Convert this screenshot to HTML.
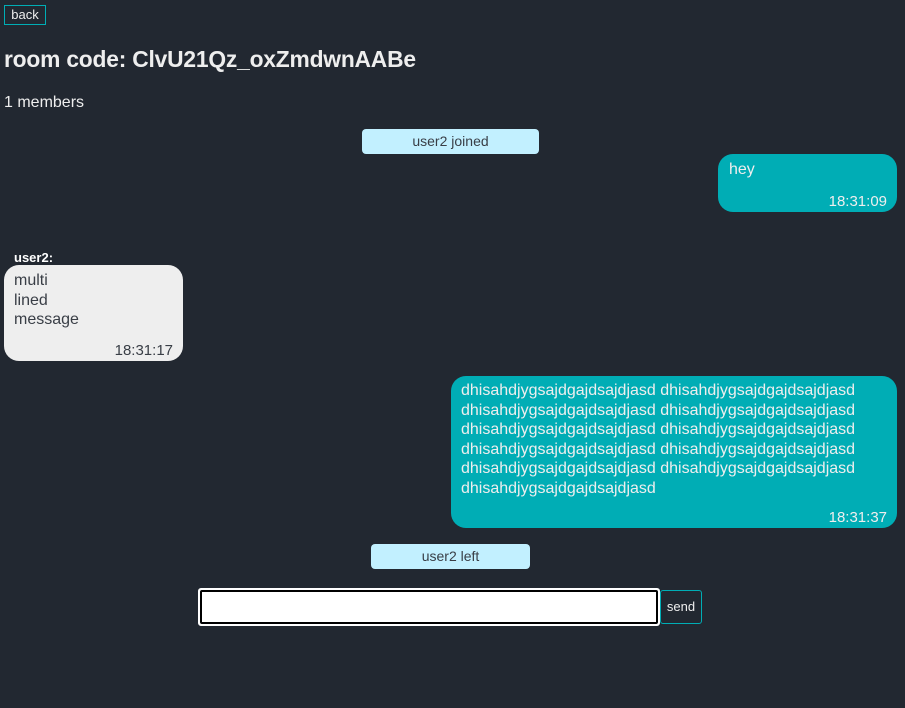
<!DOCTYPE html>
<html><head><meta charset="utf-8"><style>
*{margin:0;padding:0;box-sizing:border-box}
body{width:905px;height:708px;background:#222831;font-family:"Liberation Sans",sans-serif;color:#eeeeee;position:relative;overflow:hidden}
.a{position:absolute}
.back{left:4px;top:5px;width:42px;height:20px;border:1px solid #00adb5;font-size:13px;line-height:18px;text-align:center;color:#eee}
h1{position:absolute;left:4px;top:46px;font-size:22.8px;font-weight:bold;letter-spacing:-0.2px}
.mem{left:4px;top:94px;font-size:16px}
.sys{background:#c2f0ff;color:#393e46;border-radius:4px;font-size:14px;text-align:center;height:25px;line-height:25px}
.me{background:#00adb5;border-radius:15px;color:#eee;font-size:16px}
.ts{position:absolute;right:10px;bottom:2px;font-size:15px}
.other{background:#eeeeee;border-radius:15px;color:#393e46;font-size:16px}
.ln{position:absolute;left:10px;white-space:pre;font-size:16px;letter-spacing:0}
</style></head><body>
<div class="a back">back</div>
<h1>room code: ClvU21Qz_oxZmdwnAABe</h1>
<div class="a mem">1 members</div>
<div class="a sys" style="left:362px;top:129px;width:177px">user2 joined</div>
<div class="a me" style="left:718px;top:154px;width:179px;height:58px"><div class="a" style="left:11px;top:7px">hey</div><div class="ts">18:31:09</div></div>
<div class="a" style="left:14px;top:250px;font-size:13px;font-weight:bold;color:#fff">user2:</div>
<div class="a other" style="left:4px;top:265px;width:179px;height:96px"><div class="a" style="left:10px;top:6px;line-height:19.5px">multi<br>lined<br>message</div><div class="ts" style="right:10px">18:31:17</div></div>
<div class="a me" style="left:451px;top:376px;width:446px;height:152px">
<div class="ln" style="top:5px;line-height:19.5px">dhisahdjygsajdgajdsajdjasd dhisahdjygsajdgajdsajdjasd
dhisahdjygsajdgajdsajdjasd dhisahdjygsajdgajdsajdjasd
dhisahdjygsajdgajdsajdjasd dhisahdjygsajdgajdsajdjasd
dhisahdjygsajdgajdsajdjasd dhisahdjygsajdgajdsajdjasd
dhisahdjygsajdgajdsajdjasd dhisahdjygsajdgajdsajdjasd
dhisahdjygsajdgajdsajdjasd</div>
<div class="ts">18:31:37</div></div>
<div class="a sys" style="left:371px;top:544px;width:159px">user2 left</div>
<div class="a" style="left:198px;top:588px;width:462px;height:38px;border:1px solid #fff;border-radius:3px;background:#fff;padding:1px"><div style="width:100%;height:100%;border:2px solid #000;border-radius:2px;background:#fff"></div></div>
<div class="a" style="left:660px;top:590px;width:42px;height:34px;border:1px solid #00adb5;border-radius:3px;font-size:13px;line-height:32px;text-align:center;color:#eee">send</div>
</body></html>
